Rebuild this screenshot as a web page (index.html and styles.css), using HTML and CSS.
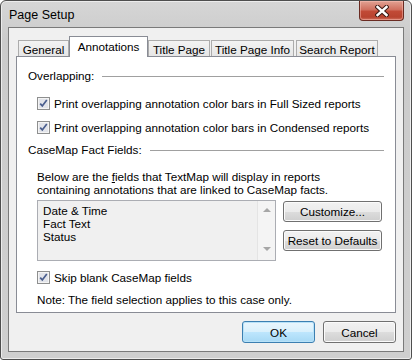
FILE: index.html
```html
<!DOCTYPE html>
<html lang="en">
<head>
    <meta charset="UTF-8">
    <meta name="viewport" content="width=device-width, initial-scale=1.0">
    <title>Page Setup</title>
    <link rel="stylesheet" href="styles.css">
</head>
<body>
    <div class="window">
        <div class="titlebar">
            <span class="title">Page Setup</span>
            <button class="close" aria-label="Close">
                <svg width="14" height="12" viewBox="0 0 14 12">
                    <path d="M2.5 2 L11.5 10 M11.5 2 L2.5 10" stroke="#3b1a14" stroke-width="4.4" stroke-linecap="square"/>
                    <path d="M2.5 2 L11.5 10 M11.5 2 L2.5 10" stroke="#ffffff" stroke-width="2.4" stroke-linecap="square"/>
                </svg>
            </button>
        </div>

        <div class="client">
            <div class="tabs">
                <div class="tab tab-general">General</div>
                <div class="tab tab-annotations active">Annotations</div>
                <div class="tab tab-title">Title Page</div>
                <div class="tab tab-info">Title Page Info</div>
                <div class="tab tab-search">Search Report</div>
            </div>

            <div class="panel">
                <div class="section-head head-overlap">
                    <span>Overlapping:</span>
                    <span class="rule"></span>
                </div>

                <label class="check check-full">
                    <span class="box">
                        <svg width="13" height="13" viewBox="0 0 13 13">
                            <rect x="0.5" y="0.5" width="12" height="12" fill="#f4f4f4" stroke="#8e8f8f"/>
                            <rect x="2" y="2" width="9" height="9" fill="#e2e4ea"/>
                            <path d="M3.2 6.6 L5.3 8.9 L9.8 2.9" fill="none" stroke="#4a5e8e" stroke-width="1.7"/>
                        </svg>
                    </span>
                    Print overlapping annotation color bars in Full Sized reports
                </label>

                <label class="check check-condensed">
                    <span class="box">
                        <svg width="13" height="13" viewBox="0 0 13 13">
                            <rect x="0.5" y="0.5" width="12" height="12" fill="#f4f4f4" stroke="#8e8f8f"/>
                            <rect x="2" y="2" width="9" height="9" fill="#e2e4ea"/>
                            <path d="M3.2 6.6 L5.3 8.9 L9.8 2.9" fill="none" stroke="#4a5e8e" stroke-width="1.7"/>
                        </svg>
                    </span>
                    Print overlapping annotation color bars in Condensed reports
                </label>

                <div class="section-head head-fields">
                    <span>CaseMap Fact Fields:</span>
                    <span class="rule"></span>
                </div>

                <p class="intro">
                    Below are the <u>f</u>ields that TextMap will display in reports<br>
                    containing annotations that are linked to CaseMap facts.
                </p>

                <div class="fields-row">
                    <div class="listbox">
                        <ul class="items">
                            <li>Date &amp; Time</li>
                            <li>Fact Text</li>
                            <li>Status</li>
                        </ul>
                        <div class="scrollbar">
                            <span class="arrow up"></span>
                            <span class="arrow down"></span>
                        </div>
                    </div>
                    <div class="side-buttons">
                        <button class="btn">Customize...</button>
                        <button class="btn">Reset to Defaults</button>
                    </div>
                </div>

                <label class="check check-skip">
                    <span class="box">
                        <svg width="13" height="13" viewBox="0 0 13 13">
                            <rect x="0.5" y="0.5" width="12" height="12" fill="#f4f4f4" stroke="#8e8f8f"/>
                            <rect x="2" y="2" width="9" height="9" fill="#e2e4ea"/>
                            <path d="M3.2 6.6 L5.3 8.9 L9.8 2.9" fill="none" stroke="#4a5e8e" stroke-width="1.7"/>
                        </svg>
                    </span>
                    Skip blank CaseMap fields
                </label>

                <p class="note">Note: The field selection applies to this case only.</p>
            </div>

            <div class="actions">
                <button class="btn btn-ok">OK</button>
                <button class="btn">Cancel</button>
            </div>
        </div>
    </div>
</body>
</html>
```

FILE: styles.css
```css
/* page */
body {
    margin: 0;
    background-color: #ffffff;
    font-family: "Liberation Sans", Arial, sans-serif;
    font-size: 11.7px;
    color: #000000;
}

/* window frame */
.window {
    width: 412px;
    height: 360px;
    box-sizing: border-box;
    border: 1px solid #4e4e4e;
    border-radius: 6px 6px 3px 3px;
    background: linear-gradient(to bottom, #d6d6d6, #cbcbcb 40px, #cfcfcf);
    box-shadow: inset 0 0 0 1px #ececec;
    padding: 0 7px 7px 7px;
    display: flex;
    flex-direction: column;
}

.titlebar {
    height: 28px;
    display: flex;
    justify-content: space-between;
    align-items: center;
}
.title {
    padding-left: 1px;
    padding-top: 2px;
    font-size: 12.5px;
}
.close {
    align-self: flex-start;
    width: 45px;
    height: 20px;
    margin: 0;
    padding: 0;
    border: 1px solid #6a2b22;
    border-top: none;
    border-radius: 0 0 4px 4px;
    background: linear-gradient(to bottom, #e2a293, #d0705f 45%, #c14a36 55%, #b8432f 85%, #d07360);
    box-shadow: inset 0 0 0 1px rgba(255, 200, 190, 0.45);
    display: flex;
    align-items: center;
    justify-content: center;
}

/* client area */
.client {
    flex: 1;
    border: 1px solid #7a7a7a;
    background-color: #f0f0f0;
    padding: 8px 7px 8px 7px;
    display: flex;
    flex-direction: column;
}

/* tabs */
.tabs {
    height: 20px;
    display: flex;
    align-items: flex-end;
    padding-left: 2px;
}
.tab {
    height: 16px;
    box-sizing: border-box;
    border: 1px solid #acacac;
    border-bottom: none;
    background: linear-gradient(to bottom, #f3f3f3, #e6e6e6);
    text-align: center;
    line-height: 17px;
}
.tab-general { width: 51px; }
.tab-title { width: 62px; }
.tab-info { width: 83px; margin-left: 1px; }
.tab-search { width: 82px; margin-left: 2px; }
.tab.active {
    width: 79px;
    height: 21px;
    margin-bottom: -1px;
    position: relative;
    z-index: 1;
    border-color: #898c95;
    background: #ffffff;
    line-height: 20px;
}

/* tab page */
.panel {
    height: 257px;
    box-sizing: border-box;
    border: 1px solid #898c95;
    background-color: #ffffff;
    padding: 0 11px;
    display: flex;
    flex-direction: column;
}

.section-head {
    height: 14px;
    line-height: 14px;
    display: flex;
    align-items: center;
    gap: 8px;
}
.section-head .rule {
    flex: 1;
    height: 1px;
    background-color: #a0a0a0;
    margin-top: 0;
}
.head-overlap { margin-top: 12px; }
.head-fields { margin-top: 8px; }

.check {
    height: 14px;
    line-height: 14px;
    margin-left: 9px;
    display: flex;
    align-items: center;
    gap: 4px;
}
.check .box {
    width: 13px;
    height: 13px;
    display: block;
    margin-top: -1px;
}
.check .box svg { display: block; }
.check-full { margin-top: 14px; }
.check-condensed { margin-top: 10px; }
.check-skip { margin-top: 10px; }

.intro {
    margin: 13px 0 0 9px;
    line-height: 13px;
}

/* list of fields + buttons */
.fields-row {
    margin: 4px 0 0 9px;
    display: flex;
    gap: 7px;
}
.listbox {
    width: 239px;
    height: 61px;
    box-sizing: border-box;
    border: 1px solid #abadb3;
    background-color: #f0f0f0;
    display: flex;
}
.items {
    flex: 1;
    list-style: none;
    margin: 0;
    padding: 3px 5px;
    line-height: 13px;
}
.scrollbar {
    width: 17px;
    border-left: 1px solid #e4e4e4;
    background-color: #f4f4f4;
    display: flex;
    flex-direction: column;
    justify-content: space-between;
    align-items: center;
    padding: 7px 0 9px 0;
}
.arrow {
    width: 0;
    height: 0;
    border-left: 4px solid transparent;
    border-right: 4px solid transparent;
}
.arrow.up { border-bottom: 4px solid #a6a6a6; }
.arrow.down { border-top: 4px solid #a6a6a6; }

.side-buttons {
    margin-top: 1px;
    display: flex;
    flex-direction: column;
    gap: 8px;
}
.side-buttons .btn {
    width: 99px;
    height: 21px;
}

.note {
    margin: 8px 0 0 9px;
    line-height: 14px;
}

/* push buttons */
.btn {
    box-sizing: border-box;
    margin: 0;
    padding: 0;
    border: 1px solid #707070;
    border-radius: 3px;
    background: linear-gradient(to bottom, #f2f2f2 0%, #ebebeb 50%, #dddddd 50%, #cfcfcf 100%);
    box-shadow: inset 0 0 0 1px #fbfbfb;
    font-family: "Liberation Sans", Arial, sans-serif;
    font-size: 11.7px;
    color: #000000;
}
.btn-ok {
    border-color: #3c7fb1;
    background: linear-gradient(to bottom, #eaf6fd 0%, #d9f0fc 50%, #bee6fd 50%, #a7d9f5 100%);
    box-shadow: inset 0 0 0 1px #b8e2f8;
}

.actions {
    margin-top: 8px;
    display: flex;
    justify-content: flex-end;
    gap: 8px;
}
.actions .btn {
    width: 73px;
    height: 22px;
}
```
